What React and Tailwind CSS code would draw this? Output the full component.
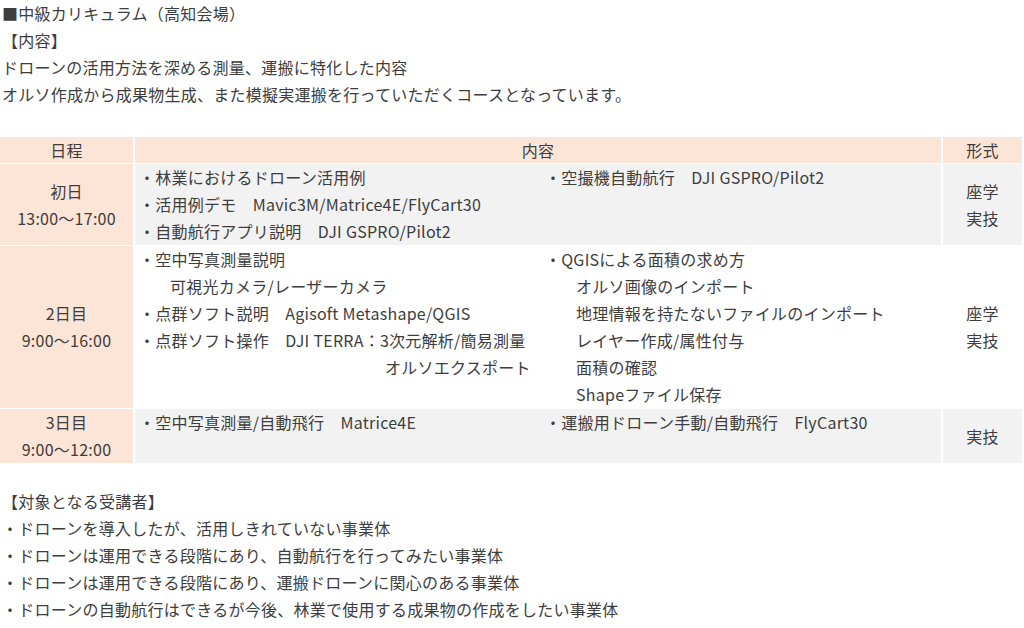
const font = { fontFamily: '"Noto Sans CJK JP", "Noto Sans", sans-serif' };

function Line({ children, indent, className = '' }) {
  return (
    <div className={`h-[27px] leading-[27px] whitespace-nowrap ${indent ? 'pl-[31px]' : ''} ${className}`}>
      {children}
    </div>
  );
}

function DateCell({ day, time }) {
  return (
    <div className="bg-[#fce4d6] flex flex-col justify-center items-center">
      <Line>{day}</Line>
      <Line>{time}</Line>
    </div>
  );
}

function FormCell({ items, bg }) {
  return (
    <div className={`${bg} flex flex-col justify-center items-center`}>
      {items.map((t) => (
        <Line key={t}>{t}</Line>
      ))}
    </div>
  );
}

function ContentCell({ left, right, bg }) {
  return (
    <div className={`${bg} grid grid-cols-[406px_1fr] pl-[4px]`}>
      <div>{left}</div>
      <div>{right}</div>
    </div>
  );
}

export default function App() {
  return (
    <div className="w-[1024px] h-[628px] bg-white text-[#3d3d3d] text-[16px] tracking-[0.25px] overflow-hidden" style={font}>
      <div className="pl-[2px]">
        <Line>■中級カリキュラム（高知会場）</Line>
        <Line>【内容】</Line>
        <Line>ドローンの活用方法を深める測量、運搬に特化した内容</Line>
        <Line>オルソ作成から成果物生成、また模擬実運搬を行っていただくコースとなっています。</Line>
      </div>

      <div className="mt-[29px] w-[1022px] grid grid-cols-[133px_1fr_79px] grid-rows-[26px_81px_162px_54px] gap-x-[2px] gap-y-[1px]">
        {/* header */}
        <div className="bg-[#fce4d6] flex items-center justify-center leading-[26px]">日程</div>
        <div className="bg-[#fce4d6] flex items-center justify-center leading-[26px]">内容</div>
        <div className="bg-[#fce4d6] flex items-center justify-center leading-[26px]">形式</div>

        {/* day 1 */}
        <DateCell day="初日" time="13:00～17:00" />
        <ContentCell
          bg="bg-[#f2f2f2]"
          left={
            <>
              <Line>・林業におけるドローン活用例</Line>
              <Line>・活用例デモ　Mavic3M/Matrice4E/FlyCart30</Line>
              <Line>・自動航行アプリ説明　DJI GSPRO/Pilot2</Line>
            </>
          }
          right={<Line>・空撮機自動航行　DJI GSPRO/Pilot2</Line>}
        />
        <FormCell bg="bg-[#f2f2f2]" items={['座学', '実技']} />

        {/* day 2 */}
        <DateCell day="2日目" time="9:00～16:00" />
        <ContentCell
          bg="bg-white"
          left={
            <>
              <Line>・空中写真測量説明</Line>
              <Line indent>可視光カメラ/レーザーカメラ</Line>
              <Line>・点群ソフト説明　Agisoft Metashape/QGIS</Line>
              <Line>・点群ソフト操作　DJI TERRA：3次元解析/簡易測量</Line>
              <Line className="pl-[246px]">オルソエクスポート</Line>
            </>
          }
          right={
            <>
              <Line>・QGISによる面積の求め方</Line>
              <Line indent>オルソ画像のインポート</Line>
              <Line indent>地理情報を持たないファイルのインポート</Line>
              <Line indent>レイヤー作成/属性付与</Line>
              <Line indent>面積の確認</Line>
              <Line indent>Shapeファイル保存</Line>
            </>
          }
        />
        <FormCell bg="bg-white" items={['座学', '実技']} />

        {/* day 3 */}
        <DateCell day="3日目" time="9:00～12:00" />
        <ContentCell
          bg="bg-[#f2f2f2]"
          left={<Line>・空中写真測量/自動飛行　Matrice4E</Line>}
          right={<Line>・運搬用ドローン手動/自動飛行　FlyCart30</Line>}
        />
        <FormCell bg="bg-[#f2f2f2]" items={['実技']} />
      </div>

      <div className="mt-[25px] pl-[2px]">
        <Line>【対象となる受講者】</Line>
        <Line>・ドローンを導入したが、活用しきれていない事業体</Line>
        <Line>・ドローンは運用できる段階にあり、自動航行を行ってみたい事業体</Line>
        <Line>・ドローンは運用できる段階にあり、運搬ドローンに関心のある事業体</Line>
        <Line>・ドローンの自動航行はできるが今後、林業で使用する成果物の作成をしたい事業体</Line>
      </div>
    </div>
  );
}
